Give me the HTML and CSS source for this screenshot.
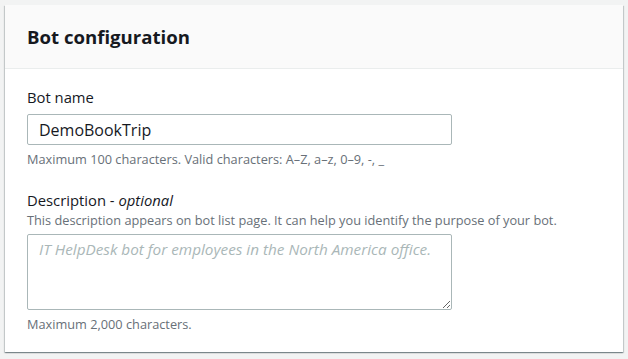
FILE: index.html
```html
<!DOCTYPE html>
<html lang="en">
  <head>
    <meta charset="UTF-8" />
    <meta name="viewport" content="width=device-width, initial-scale=1.0" />
    <title>Bot configuration</title>
    <link rel="stylesheet" href="styles.css">
  </head>
  <body>
    <!-- Bot configuration container -->
    <div class="container">
      <div class="container-header">
        <h2>Bot configuration</h2>
      </div>
      <div class="container-content">
        <div class="form-field">
          <label class="field-label" for="bot-name">Bot name</label>
          <input class="field-input" id="bot-name" type="text" value="DemoBookTrip" />
          <div class="field-hint">Maximum 100 characters. Valid characters: A–Z, a–z, 0–9, -, _</div>
        </div>
        <div class="form-field">
          <label class="field-label" for="bot-desc">Description - <i>optional</i></label>
          <div class="field-description">
            This description appears on bot list page. It can help you identify the purpose of your bot.
          </div>
          <textarea class="field-textarea" id="bot-desc" placeholder="IT HelpDesk bot for employees in the North America office."></textarea>
          <div class="field-hint">Maximum 2,000 characters.</div>
        </div>
      </div>
    </div>
  </body>
</html>
```

FILE: styles.css
```css
* {
  margin: 0;
  padding: 0;
  box-sizing: border-box;
}
body {
  background-color: #f2f3f3;
  font-family: "Open Sans", "Noto Sans", sans-serif;
  color: #16191f;
  padding: 5px;
}
.container {
  width: 618px;
  height: 347px;
  background-color: #ffffff;
  box-shadow: 0 1px 1px 0 rgba(0, 28, 36, 0.3), 1px 1px 1px 0 rgba(0, 28, 36, 0.15),
    -1px 1px 1px 0 rgba(0, 28, 36, 0.15);
}
.container-header {
  height: 64px;
  background-color: #fafafa;
  border-bottom: 1px solid #eaeded;
  padding: 0 22px;
  display: flex;
  align-items: center;
}
.container-header h2 {
  font-size: 18.6px;
  font-weight: 700;
  line-height: 22px;
}
.container-content {
  padding: 18px 22px 0;
}
.form-field {
  margin-bottom: 23px;
}
.field-label {
  display: block;
  font-size: 14.8px;
  line-height: 20px;
  margin-bottom: 7px;
}
.field-label i {
  font-style: italic;
}
.field-description {
  font-size: 12.75px;
  line-height: 16px;
  color: #687078;
  margin-top: -5px;
  margin-bottom: 6px;
}
.field-input,
.field-textarea {
  display: block;
  width: 425px;
  border: 1px solid #aab7b8;
  border-radius: 2px;
  font-family: "Open Sans", "Noto Sans", sans-serif;
  color: #16191f;
  outline: none;
}
.field-input {
  height: 31px;
  padding: 0 11px;
  font-size: 16px;
}
.field-textarea {
  height: 76px;
  padding: 3px 11px;
  font-size: 15.3px;
  line-height: 22px;
  resize: vertical;
}
.field-textarea::placeholder {
  color: #aab7b8;
  font-style: italic;
}
.field-hint {
  font-size: 12.75px;
  line-height: 16px;
  color: #687078;
  margin-top: 6px;
}
```
